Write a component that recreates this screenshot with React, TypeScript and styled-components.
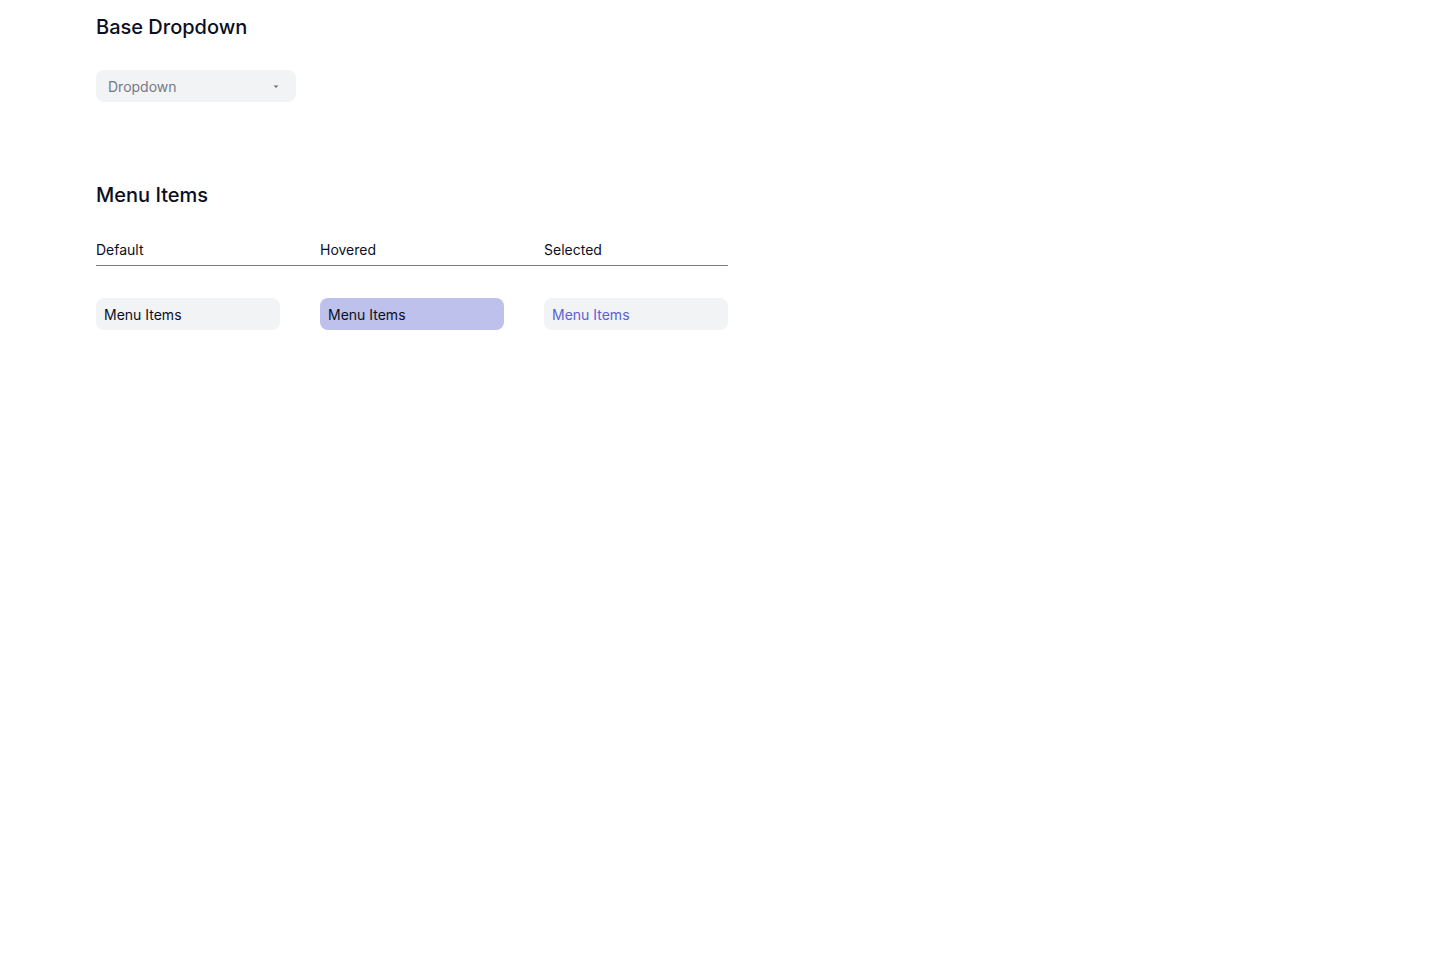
import { createGlobalStyle } from "styled-components";
import styled from "styled-components";

const GlobalStyle = createGlobalStyle`
  body {
    margin: 0;
    background: #ffffff;
    font-family: Inter, "Noto Sans", sans-serif;
    color: #0b0f1f;
  }
`;

type ItemState = "default" | "hovered" | "selected";

const states: { label: string; state: ItemState }[] = [
  { label: "Default", state: "default" },
  { label: "Hovered", state: "hovered" },
  { label: "Selected", state: "selected" },
];

export default function App() {
  return (
    <>
      <GlobalStyle />
      <Page>
        <Section>
          <Title>Base Dropdown</Title>
          <DropdownButton type="button">
            <span>Dropdown</span>
            <Caret viewBox="0 0 8 8" width="8" height="8">
              <path d="M1.5 3.5 L6.5 3.5 L4 6 Z" fill="#6b6f7b" />
            </Caret>
          </DropdownButton>
        </Section>

        <Section $top={79}>
          <Title>Menu Items</Title>
          <StateGrid>
            {states.map((s) => (
              <ColumnLabel key={s.label}>{s.label}</ColumnLabel>
            ))}
          </StateGrid>
          <ItemGrid>
            {states.map((s) => (
              <MenuItem key={s.label} $state={s.state}>
                Menu Items
              </MenuItem>
            ))}
          </ItemGrid>
        </Section>
      </Page>
    </>
  );
}

const Page = styled.div`
  padding: 13px 96px 0;
  display: flex;
  flex-direction: column;
`;

const Section = styled.section<{ $top?: number }>`
  display: flex;
  flex-direction: column;
  align-items: flex-start;
  margin-top: ${(p) => p.$top ?? 0}px;
`;

const Title = styled.h2`
  margin: 0 0 29px;
  font-size: 20px;
  line-height: 28px;
  font-weight: 500;
  color: #0b0f1f;
`;

const DropdownButton = styled.button`
  width: 200px;
  height: 32px;
  padding: 0 16px 0 12px;
  border: none;
  border-radius: 8px;
  background: #f2f3f5;
  display: flex;
  align-items: center;
  justify-content: space-between;
  font-family: inherit;
  font-size: 14px;
  color: #767a86;
  cursor: pointer;
`;

const Caret = styled.svg`
  display: block;
`;

const StateGrid = styled.div`
  display: grid;
  grid-template-columns: repeat(3, 184px);
  column-gap: 40px;
  padding-bottom: 5px;
  border-bottom: 1px solid #7a7c84;
  margin-top: 2px;
`;

const ColumnLabel = styled.div`
  font-size: 14px;
  line-height: 20px;
  color: #0b0f1f;
`;

const ItemGrid = styled.div`
  display: grid;
  grid-template-columns: repeat(3, 184px);
  column-gap: 40px;
  margin-top: 32px;
`;

const itemBg: Record<ItemState, string> = {
  default: "#f2f3f5",
  hovered: "#bdc1ec",
  selected: "#f2f3f5",
};

const itemColor: Record<ItemState, string> = {
  default: "#0b0f1f",
  hovered: "#0b0f1f",
  selected: "#5a62d6",
};

const MenuItem = styled.div<{ $state: ItemState }>`
  height: 32px;
  padding: 0 8px;
  border-radius: 8px;
  display: flex;
  align-items: center;
  font-size: 14px;
  background: ${(p) => itemBg[p.$state]};
  color: ${(p) => itemColor[p.$state]};
`;
